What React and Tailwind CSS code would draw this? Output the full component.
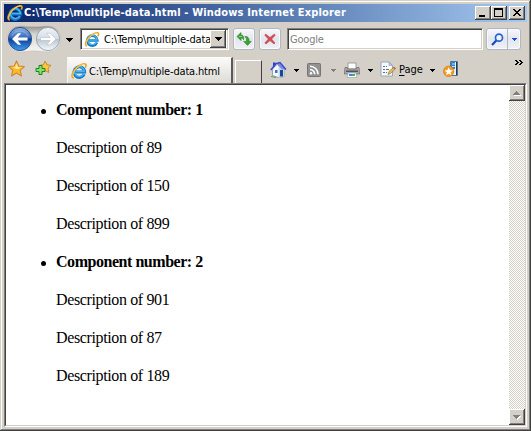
const UI = "font-['DejaVu_Sans_Condensed','DejaVu_Sans',sans-serif]";
const RAISED = "bg-[#d4d0c8] shadow-[inset_-1px_-1px_#404040,inset_1px_1px_#ffffff,inset_-2px_-2px_#808080]";

function IeLogo({ className = "" }) {
  return (
    <svg viewBox="0 0 16 16" className={"shrink-0 " + className}>
      <path d="M13.200 11.200A5.300 5.300 0 1 1 13.600 8.900H4.500" fill="none" stroke="#1578c4" strokeWidth="3" />
      <path d="M12.700 10.900A4.900 4.900 0 1 1 13.300 8.600H5" fill="none" stroke="#45b4f0" strokeWidth="1.500" />
      <path d="M2.800 14.800C-.4 14.600 1.200 8.600 6 4.400 10 .9 14.600-.4 15 2c.1.900-.2 1.700-.7 2.600" fill="none" stroke="#e9a81b" strokeWidth="1.700" />
      <path d="M2.200 13.900C.9 12 3.400 7.400 6.600 4.300 9.600 1.600 12.800.6 14 1.300" fill="none" stroke="#ffe07a" strokeWidth=".7" />
    </svg>
  );
}

function Arrow({ className = "" }) {
  return (
    <svg viewBox="0 0 7 4" width="7" height="4" shapeRendering="crispEdges" className={"shrink-0 " + className}>
      <path d="M0 0h7v1H6v1H5v1H4v1H3V3H2V2H1V1H0z" fill="currentColor" />
    </svg>
  );
}

function SmallArrow({ className = "" }) {
  return (
    <svg viewBox="0 0 5 3" width="5" height="3" shapeRendering="crispEdges" className={"shrink-0 " + className}>
      <path d="M0 0h5v1H4v1H3v1H2V2H1V1H0z" fill="currentColor" />
    </svg>
  );
}

function NavButtons() {
  return (
    <svg width="56" height="30" viewBox="0 0 56 30" className="shrink-0">
      <defs>
        <linearGradient id="pill" x1="0" y1="0" x2="0" y2="1">
          <stop offset="0" stopColor="#8d8c89" />
          <stop offset=".3" stopColor="#d6d4cf" />
          <stop offset="1" stopColor="#f8f7f5" />
        </linearGradient>
        <linearGradient id="back" x1="0" y1="0" x2="0" y2="1">
          <stop offset="0" stopColor="#8fb4e4" />
          <stop offset=".45" stopColor="#3568ba" />
          <stop offset=".5" stopColor="#0f3f96" />
          <stop offset="1" stopColor="#3f9ff0" />
        </linearGradient>
        <linearGradient id="fwd" x1="0" y1="0" x2="0" y2="1">
          <stop offset="0" stopColor="#f2f5f8" />
          <stop offset=".48" stopColor="#d5dde5" />
          <stop offset=".52" stopColor="#b9c5d1" />
          <stop offset="1" stopColor="#f6fafd" />
        </linearGradient>
      </defs>
      <path d="M14 2c5 0 8 .6 14 .6s9-.6 14-.6a13 13 0 0 1 0 26c-5 0-8-1-14-1s-9 1-14 1A13 13 0 0 1 14 2z" fill="url(#pill)" stroke="#c3c0ba" strokeWidth=".7" />
      <circle cx="14" cy="15" r="11.600" fill="url(#back)" stroke="#2a5299" />
      <path d="M6 12a8.500 7.500 0 0 1 16 0" fill="none" stroke="#b8d0ef" strokeWidth="1" opacity=".5" />
      <path d="M6 15l6-5.800h3.200L11.800 13.500H21.500v3h-9.700l3.400 4.300H12z" fill="#fff" />
      <circle cx="42" cy="15" r="11.600" fill="url(#fwd)" stroke="#9ba5b0" />
      <path d="M50 15l-6-5.800h-3.200l3.400 4.300H34.500v3h9.700l-3.400 4.300H44z" fill="#fff" stroke="#a9b3be" strokeWidth=".5" />
    </svg>
  );
}

function Star({ size, className = "" }) {
  return (
    <svg width={size} height={size} viewBox="0 0 16 16" className={"shrink-0 " + className}>
      <path d="M8 .8l2.200 4.900 5.200.5-3.900 3.500 1.200 5.300L8 12.300 3.300 15l1.200-5.300L.6 6.200l5.200-.5z" fill="#ffb92b" stroke="#c98a35" strokeWidth="1" strokeLinejoin="round" />
      <path d="M8 3l1.400 3.700 3.600.4-4.200 1.500L4.500 7l2.200-.4z" fill="#ffe694" />
    </svg>
  );
}

function AddFavorite() {
  return (
    <svg width="17" height="16" viewBox="0 0 17 16" className="shrink-0">
      <path d="M10.200 1l1.700 3.800 4.100.5-3 2.900.8 4.300-3.600-2-3.700 2 .8-4.300-3-2.900 4.100-.5z" fill="#ffc83c" stroke="#c98a35" />
      <path d="M4 5.500h3v3h3v3H7v3H4v-3H1v-3h3z" fill="#8ae065" stroke="#17852a" />
    </svg>
  );
}

function Refresh() {
  return (
    <svg width="16" height="14" viewBox="0 0 16 14">
      <path d="M5 .6L1 4.500l4 4V6c1.300 0 2.200.6 2.500 1.700C8.200 4.800 7.300 3 5 3z" fill="#3aa531" stroke="#257c25" strokeWidth=".6" />
      <path d="M3 4.500h3" stroke="#a5e58b" strokeWidth=".8" />
      <path d="M11.500 13.400l3.800-4h-2.200c.2-3.400-1.500-5.400-4.300-4.800 1.500.8 1.900 2.400 1.700 4.800H7.700z" fill="#3aa531" stroke="#257c25" strokeWidth=".6" />
    </svg>
  );
}

function Home() {
  return (
    <svg width="17" height="17" viewBox="0 0 17 17" className="shrink-0">
      <path d="M3 1.500h2.500V5L3 7z" fill="#2b3fc4" />
      <path d="M2.500 8L8 2.500 14.500 9v6.500l-6 1-6-2z" fill="#f4f7fb" stroke="#8290a5" strokeWidth=".8" />
      <path d="M8.500 4L14.500 9v6.500l-6 1z" fill="#cbd7e6" />
      <path d="M5.500 2L10 1.500 16 8.500H12z" fill="#7c8be0" />
      <path d="M.8 9L6 2.500l4-1L16 8.500" fill="none" stroke="#3949c9" strokeWidth="1.400" />
      <path d="M5 9h2.500v3H5z" fill="#3b74bd" />
      <path d="M10 9h3v6.500h-3z" fill="#164b91" />
      <path d="M1 15.500l5 1" stroke="#53a153" />
    </svg>
  );
}

function Feed() {
  return (
    <svg width="14" height="14" viewBox="0 0 14 14" className="shrink-0">
      <rect x=".5" y=".5" width="13" height="13" rx="1" fill="#929292" stroke="#757575" />
      <path d="M3 3.200a8 8 0 0 1 8 8M3 6.500a4.700 4.700 0 0 1 4.700 4.700" fill="none" stroke="#fff" strokeWidth="1.600" />
      <circle cx="4" cy="10.300" r="1.200" fill="#fff" />
    </svg>
  );
}

function Printer() {
  return (
    <svg width="16" height="16" viewBox="0 0 16 16" className="shrink-0">
      <path d="M4 1h8v6H4z" fill="#fff" stroke="#8c8c8c" strokeWidth=".8" />
      <path d="M1 5.500h2.500V7h9V5.500H15l.7 6.500H.3z" fill="#a8aaad" stroke="#67696c" strokeWidth=".7" />
      <path d="M2 8.500h12V10H2z" fill="#505256" />
      <path d="M4 11h8l.8 4.500H3.200z" fill="#fff" stroke="#999" strokeWidth=".6" />
      <path d="M5 12h3v2H5z" fill="#328fe0" />
      <path d="M8 12h3v2H8z" fill="#39ae7e" />
    </svg>
  );
}

function PageIcon() {
  return (
    <svg width="16" height="16" viewBox="0 0 16 16" className="shrink-0">
      <path d="M1 1h8l3.500 3.500v10.500H1z" fill="#f6f9fc" stroke="#8899ab" strokeWidth=".8" />
      <path d="M9 1v3.500h3.500z" fill="#c4d0dd" stroke="#8899ab" strokeWidth=".6" />
      <path d="M3 5.500h2M6 5.500h1M3 8.500h2M6 8.500h3M3 11.500h2M6 11.500h1" stroke="#58718f" />
      <path d="M8 13.500l1-3 5-4.500 1.500 1.700-5 4.800z" fill="#e9bd53" stroke="#877442" strokeWidth=".7" />
      <path d="M13.500 6.200l1.700 1.700" stroke="#d55b54" strokeWidth="1.500" />
    </svg>
  );
}

function ResearchIcon() {
  return (
    <svg width="16" height="16" viewBox="0 0 16 16" className="shrink-0">
      <path d="M7.500.5h7v14h-7z" fill="#e9f4fc" stroke="#54738f" />
      <path d="M8 1h4v7H8z" fill="#2786d1" />
      <path d="M9 3h3M9 5.500h3" stroke="#bfe2f8" />
      <path d="M13.500 1v13" stroke="#26384a" />
      <circle cx="5.700" cy="10.300" r="5.200" fill="#f49a21" stroke="#d9780f" strokeWidth=".7" />
      <path d="M5.700 6.300l1.200 2.800 3 .3-2.300 1.900.7 3-2.600-1.600-2.600 1.600.7-3-2.300-1.900 3-.3z" fill="#fff" />
    </svg>
  );
}

function WindowButton({ kind }) {
  return (
    <div className={"h-[14px] w-4 " + RAISED}>
      <svg width="16" height="14" viewBox="0 0 16 14" shapeRendering="crispEdges">
        {kind === "min" && <path d="M4 9h6v2H4z" />}
        {kind === "max" && <path d="M3 2h9v9H3zM4 4v6h7V4z" fillRule="evenodd" />}
        {kind === "close" && (
          <path d="M4 3h2v1h1v1h2V4h1V3h2v1h-1v1h-1v1H9v1h1v1h1v1h1v1h-2V9H9V8H7v1H6v1H4V9h1V8h1V7h1V6H6V5H5V4H4z" />
        )}
      </svg>
    </div>
  );
}

function ScrollButton({ down }) {
  return (
    <div className={"h-4 w-4 " + RAISED}>
      <svg width="16" height="16" viewBox="0 0 16 16" shapeRendering="crispEdges">
        {down ? (
          <g>
            <path d="M5 7h7v1h-1v1h-1v1H9v1H8v-1H7V9H6V8H5z" fill="#fff" />
            <path d="M4 6h7v1h-1v1H9v1H8v1H7V9H6V8H5V7H4z" fill="#808080" />
          </g>
        ) : (
          <g>
            <path d="M5 10h7v1H5z" fill="#fff" />
            <path d="M7 6h1v1h1v1h1v1h1v1H4V9h1V8h1V7h1z" fill="#808080" />
          </g>
        )}
      </svg>
    </div>
  );
}

function TitleBar() {
  return (
    <div className="flex h-[18px] items-center bg-linear-to-r from-[#0a246a] to-[#a6caf0] pl-[3px] pr-[2px]">
      <IeLogo className="h-4 w-4" />
      <span className={"ml-px flex-1 whitespace-pre text-[11px] font-bold leading-[18px] tracking-[0.165px] text-white " + UI}>
        C:\Temp\multiple-data.html - Windows Internet Explorer
      </span>
      <div className="flex">
        <WindowButton kind="min" />
        <WindowButton kind="max" />
        <div className="ml-[2px]"><WindowButton kind="close" /></div>
      </div>
    </div>
  );
}

const FIELD = "border border-b-white border-r-white border-l-[#808080] border-t-[#808080] bg-white shadow-[inset_1px_1px_#404040,inset_-1px_-1px_#d4d0c8]";
const BUTTON = "flex h-[22px] items-center justify-center rounded-[3px] border border-[#b0b6c4] bg-linear-to-b from-[#f7f8fb] via-[#e3e6ee] to-[#eff1f5] shadow-[inset_0_0_0_1px_#f9fafc]";

function AddressRow() {
  return (
    <div className="flex h-[35px] items-start pl-[2px]">
      <div className="mt-[2px]"><NavButtons /></div>
      <Arrow className="ml-[4px] mt-4" />
      <div className={"ml-[7px] mt-[6px] flex h-[22px] w-[149px] items-center pl-[3px] pr-[2px] " + FIELD}>
        <IeLogo className="h-[15px] w-4" />
        <span className={"ml-[4px] w-[108px] overflow-hidden whitespace-pre pt-px text-[11px] leading-4 tracking-[-0.1px] text-black " + UI}>
          C:\Temp\multiple-data
        </span>
        <div className={"flex h-[18px] w-4 shrink-0 items-center justify-center " + RAISED}><Arrow /></div>
      </div>
      <div className={"ml-1 mt-[6px] w-[22px] " + BUTTON}><Refresh /></div>
      <div className={"ml-1 mt-[6px] w-[22px] " + BUTTON}>
        <svg width="12" height="12" viewBox="0 0 12 12">
          <path d="M1.500 1L6 4.500 10.500 1 11 2.500 7.600 6l3.400 4-1 1L6 7.600 2 11 .8 10l3.600-4L1 2.500z" fill="#d84a4c" stroke="#b8474b" strokeWidth=".6" />
        </svg>
      </div>
      <div className={"ml-[6px] mt-[6px] h-[22px] w-[196px] pl-[2px] text-[11px] leading-[22px] tracking-[-0.2px] text-[#808080] " + UI + " " + FIELD}>Google</div>
      <div className={"ml-[3px] mt-[6px] w-[35px] " + BUTTON}>
        <div className="flex flex-1 justify-center">
          <svg width="13" height="13" viewBox="0 0 13 13">
            <circle cx="8" cy="4.700" r="3.500" fill="#edf6ff" stroke="#2861d2" strokeWidth="1.700" />
            <path d="M5.300 7.500L1 12" stroke="#174ac3" strokeWidth="2.200" />
          </svg>
        </div>
        <div className="flex h-5 w-[13px] items-center justify-center border-l border-[#b0b6c4]"><SmallArrow className="text-[#1453cc]" /></div>
      </div>
    </div>
  );
}

function TabRow() {
  return (
    <div className="flex h-[26px] items-start">
      <Star size={17} className="ml-[4px] mt-[3px]" />
      <div className="ml-[10px] mt-[3px]"><AddFavorite /></div>
      <div className="ml-[15px] flex h-[26px] w-[166px] items-center border-l border-r-2 border-t border-l-[#f4f3f1] border-r-[#5c5a57] border-t-white bg-linear-to-b from-[#fbfbfa] to-[#dedbd5] pl-[3px]">
        <IeLogo className="h-4 w-4" />
        <span className={"ml-[2px] mt-[2px] whitespace-pre text-[11px] leading-4 tracking-[-0.16px] text-black " + UI}>C:\Temp\multiple-data.html</span>
      </div>
      <div className="ml-[2px] mt-[3px] h-[23px] w-[27px] border-l border-r border-t border-l-white border-r-[#404040] border-t-white" />
      <div className="ml-2 mt-1"><Home /></div>
      <SmallArrow className="ml-[7px] mt-3 text-black" />
      <div className="ml-[8px] mt-[6px]"><Feed /></div>
      <SmallArrow className="ml-[10px] mt-3 text-[#808080]" />
      <div className="ml-[8px] mt-[5px]"><Printer /></div>
      <SmallArrow className="ml-[8px] mt-3 text-black" />
      <div className="ml-[7px] mt-[4px]"><PageIcon /></div>
      <span className={"ml-[3px] mt-[5px] w-[25px] whitespace-pre text-[11px] leading-4 text-black " + UI}>
        <span className="underline underline-offset-2">P</span>age
      </span>
      <SmallArrow className="ml-[6px] mt-3 text-black" />
      <div className="ml-[8px] mt-[4px]"><ResearchIcon /></div>
      <svg width="8" height="5" viewBox="0 0 8 5" shapeRendering="crispEdges" className="ml-[56px] mt-[3px]">
        <path d="M0 0h2v1h1v1h1v1H3v1H2v1H0V4h1V3h1V2H1V1H0zM4 0h2v1h1v1h1v1H7v1H6v1H4V4h1V3h1V2H5V1H4z" />
      </svg>
    </div>
  );
}

const components = [
  { number: 1, descriptions: [89, 150, 899] },
  { number: 2, descriptions: [901, 87, 189] },
];

function Content() {
  return (
    <div className="flex h-[344px] border border-b-white border-r-white border-l-[#808080] border-t-[#808080]">
      <div className="flex flex-1 border border-b-[#d4d0c8] border-r-[#d4d0c8] border-l-[#404040] border-t-[#404040] bg-white">
        <ul className="flex-1 pl-[50px] pt-[15px] font-['Liberation_Serif','Times_New_Roman',serif] text-[16px] leading-[20px] text-black">
          {components.map((c) => (
            <li key={c.number} className="mb-[18px]">
              <div className="flex items-center">
                <span className="-ml-[15px] mr-[10px] mt-[3px] h-[5px] w-[5px] rounded-full bg-black" />
                <b className="tracking-[-0.46px]">Component number: {c.number}</b>
              </div>
              {c.descriptions.map((d) => (
                <p key={d} className="mt-[18px] tracking-[-0.37px]">Description of {d}</p>
              ))}
            </li>
          ))}
        </ul>
        <div className="flex w-4 flex-col justify-between bg-[conic-gradient(#ffffff_25%,#d4d0c8_0_50%,#ffffff_0_75%,#d4d0c8_0)] bg-size-[2px_2px]">
          <ScrollButton />
          <ScrollButton down />
        </div>
      </div>
    </div>
  );
}

export default function App() {
  return (
    <div className="h-[431px] w-[531px] overflow-hidden bg-[#d4d0c8] pl-1 pr-[4px] pt-1 shadow-[inset_-1px_-1px_#404040,inset_1px_1px_#d4d0c8,inset_-2px_-2px_#808080,inset_2px_2px_#ffffff]">
      <TitleBar />
      <AddressRow />
      <TabRow />
      <Content />
    </div>
  );
}
